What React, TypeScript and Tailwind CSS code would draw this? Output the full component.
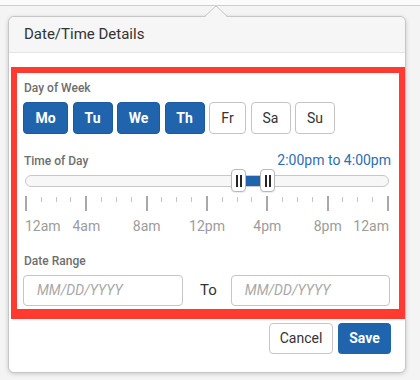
import React from "react";

const days = [
  { t: "Mo", on: true, w: "w-[45px]" },
  { t: "Tu", on: true, w: "w-[40px]" },
  { t: "We", on: true, w: "w-[43px]" },
  { t: "Th", on: true, w: "w-[40px]" },
  { t: "Fr", on: false, w: "w-[37px]" },
  { t: "Sa", on: false, w: "w-[40px]" },
  { t: "Su", on: false, w: "w-[40px]" },
];

const ticks = Array.from({ length: 25 }, (_, i) => i);
const labels = [
  { t: "12am", h: 0 },
  { t: "4am", h: 4 },
  { t: "8am", h: 8 },
  { t: "12pm", h: 12 },
  { t: "4pm", h: 16 },
  { t: "8pm", h: 20 },
  { t: "12am", h: 24 },
];

function Handle() {
  return (
    <div className="w-[15px] h-[23px] bg-white border border-[#b8b8b8] rounded-[4px] flex items-center justify-center gap-[2px] shadow-[0_1px_1px_rgba(0,0,0,0.08)]">
      <div className="w-[2px] h-[12px] bg-[#262626]" />
      <div className="w-[2px] h-[12px] bg-[#262626]" />
    </div>
  );
}

export default function App() {
  return (
    <div
      className="w-[420px] h-[380px] bg-[#f4f4f4] overflow-hidden"
      style={{ fontFamily: "Roboto, 'Liberation Sans', sans-serif" }}
    >
      <div className="h-[6px] bg-[#fbfbfb] border-b border-[#cfcfcf]" />
      <div className="relative ml-[8px] mt-[10px] w-[398px] h-[357px] bg-white border border-[#c6c6c6] rounded-[6px] shadow-[0_1px_4px_rgba(0,0,0,0.18)] flex flex-col">
        <svg
          className="absolute left-[195px] top-[-12px]"
          width="24"
          height="13"
          viewBox="0 0 24 13"
        >
          <polygon points="0,13 12,0.8 24,13" fill="#f6f6f6" />
          <polyline
            points="0.5,11.5 12,1 23.5,11.5"
            fill="none"
            stroke="#c8c8c8"
            strokeWidth="1"
          />
        </svg>
        <div className="h-[36px] shrink-0 bg-[#f6f6f6] border-b border-[#e4e4e4] rounded-t-[6px] flex items-center pl-[15px] text-[15px] text-[#333]">
          Date/Time Details
        </div>

        <div className="mt-[14px] ml-[2px] w-[394px] h-[252px] border-[#ff3a30] border-t-[6px] border-l-[6px] border-r-[6px] border-b-[10px] pl-[6px] pt-[7px] flex flex-col">
          <div className="h-[16px] leading-[16px] text-[12px] font-medium text-[#6e6e6e] pl-[1px]">
            Day of Week
          </div>
          <div className="mt-[6px] flex gap-[4.5px]">
            {days.map((d) =>
              d.on ? (
                <div
                  key={d.t}
                  className={`${d.w} h-[32px] rounded-[4px] bg-[#2064ae] border border-[#1b5a9e] text-white font-bold text-[14px] flex items-center justify-center`}
                >
                  {d.t}
                </div>
              ) : (
                <div
                  key={d.t}
                  className={`${d.w} h-[32px] rounded-[4px] bg-white border border-[#c4c4c4] text-[#333] text-[14px] flex items-center justify-center`}
                >
                  {d.t}
                </div>
              )
            )}
          </div>

          <div className="mt-[17px] h-[18px] flex items-baseline justify-between pl-[1px] pr-[8px]">
            <span className="text-[12px] font-medium text-[#6e6e6e] leading-[18px]">
              Time of Day
            </span>
            <span className="text-[14px] text-[#2a6ebb] leading-[18px]">
              2:00pm to 4:00pm
            </span>
          </div>

          <div className="ml-[2px] w-[364px]">
            <div className="relative h-[23px]">
              <div className="absolute left-0 right-0 top-[6px] h-[12px] rounded-full bg-[#f7f7f7] border border-[#c8c8c8]" />
              <div className="absolute left-[221px] w-[16px] top-[7px] h-[10px] bg-[#2064ae]" />
              <div className="absolute left-[206px] top-0">
                <Handle />
              </div>
              <div className="absolute left-[235px] top-0">
                <Handle />
              </div>
            </div>
            <div className="mt-[4px] h-[15px] flex justify-between items-start">
              {ticks.map((i) =>
                i % 4 === 0 ? (
                  <div key={i} className="w-[2px] h-[15px] bg-[#a8a8a8]" />
                ) : (
                  <div key={i} className="w-[1px] h-[5px] mt-[1px] bg-[#c4c4c4]" />
                )
              )}
            </div>
            <div className="relative mt-[5px] h-[20px] text-[14px] leading-[20px] text-[#9c9c9c]">
              {labels.map((l, i) => {
                if (i === 0)
                  return (
                    <span key={i} className="absolute left-0 top-0">
                      {l.t}
                    </span>
                  );
                if (i === labels.length - 1)
                  return (
                    <span key={i} className="absolute right-0 top-0">
                      {l.t}
                    </span>
                  );
                return (
                  <span
                    key={i}
                    className="absolute top-0 -translate-x-1/2"
                    style={{ left: `${1 + (l.h / 24) * 362}px` }}
                  >
                    {l.t}
                  </span>
                );
              })}
            </div>
          </div>

          <div className="mt-[17px] h-[16px] leading-[16px] text-[12px] font-medium text-[#6e6e6e] pl-[1px]">
            Date Range
          </div>
          <div className="mt-[6px] flex items-center">
            <div className="w-[160px] h-[31px] border border-[#c6c6c6] rounded-[4px] flex items-center pl-[13px] text-[14px] italic text-[#a8a8a8]">
              MM/DD/YYYY
            </div>
            <span className="ml-[17px] mr-[14px] text-[15px] text-[#333]">To</span>
            <div className="w-[159px] h-[31px] border border-[#c6c6c6] rounded-[4px] flex items-center pl-[13px] text-[14px] italic text-[#a8a8a8]">
              MM/DD/YYYY
            </div>
          </div>
        </div>

        <div className="mt-[4px] flex justify-end gap-[5px] pr-[14px]">
          <div className="w-[64px] h-[31px] border border-[#c6c6c6] rounded-[4px] bg-white flex items-center justify-center text-[14px] text-[#333]">
            Cancel
          </div>
          <div className="w-[53px] h-[31px] rounded-[4px] bg-[#2064ae] flex items-center justify-center text-[14px] font-bold text-white">
            Save
          </div>
        </div>
      </div>
    </div>
  );
}
